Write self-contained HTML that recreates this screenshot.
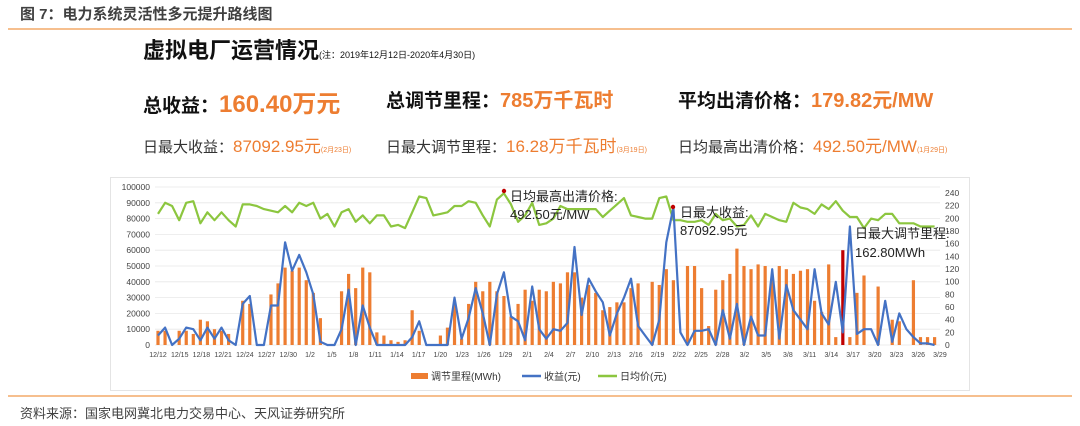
<!DOCTYPE html>
<html><head><meta charset="utf-8"><style>
*{margin:0;padding:0}
body{width:1080px;height:426px;background:#fff;position:relative;overflow:hidden;font-family:"Liberation Sans","Noto Sans CJK SC",sans-serif}
.a{position:absolute;white-space:nowrap}
.o{color:#ED7D31}
.hr{position:absolute;left:8px;width:1064px;height:2px;background:#F6BF8E}
</style></head><body>
<div class="a" style="left:20px;top:3px;font-size:15px;font-weight:bold;color:#404040">图 7：电力系统灵活性多元提升路线图</div>
<div class="hr" style="top:28px"></div>
<div class="a" style="left:143px;top:33px;font-size:22px;font-weight:bold;color:#111">虚拟电厂运营情况<span style="font-size:9px;font-weight:normal">(注：2019年12月12日-2020年4月30日)</span></div>
<div class="a" style="left:143px;top:84px;font-size:19px;font-weight:bold;color:#111">总收益：<span class="o" style="font-size:24px">160.40万元</span></div>
<div class="a" style="left:386px;top:84px;font-size:19px;font-weight:bold;color:#111">总调节里程：<span class="o" style="font-size:20px">785万千瓦时</span></div>
<div class="a" style="left:678px;top:84px;font-size:19px;font-weight:bold;color:#111">平均出清价格：<span class="o" style="font-size:20px">179.82元/MW</span></div>
<div class="a" style="left:143px;top:132px;font-size:15px;color:#333">日最大收益：<span class="o" style="font-size:17px">87092.95元</span><span class="o" style="font-size:7px">(2月23日)</span></div>
<div class="a" style="left:386px;top:132px;font-size:15px;color:#333">日最大调节里程：<span class="o" style="font-size:17px">16.28万千瓦时</span><span class="o" style="font-size:7px">(3月19日)</span></div>
<div class="a" style="left:678px;top:132px;font-size:15px;color:#333">日均最高出清价格：<span class="o" style="font-size:17px">492.50元/MW</span><span class="o" style="font-size:7px">(1月29日)</span></div>
<svg id="c" class="a" style="left:0;top:0" width="1080" height="426" xmlns="http://www.w3.org/2000/svg" font-family="Liberation Sans,Noto Sans CJK SC,sans-serif"></svg>
<div class="hr" style="top:395px"></div>
<div class="a" style="left:20px;top:403px;font-size:13px;color:#404040">资料来源：国家电网冀北电力交易中心、天风证券研究所</div>
<script>
var bars=[9,9,0,9,9,7,16,15,10,9,7,0,28,26,0,0,32,39,49,47,49,41,33,17,0,0,34,45,36,49,46,8,6,3,2,3,22,9,0,0,6,11,26,4,26,40,34,40,34,31,18,26,35,28,35,34,40,39,46,46,30,38,33,22,24,27,27,36,39,0,40,38,48,41,0,50,50,36,12,35,41,45,61,50,48,51,50,43,50,48,45,47,48,28,21,51,5,60,5,33,44,0,37,0,16,15,0,41,5,5,5];
var blue=[6,11,0,4,11,10,3,11,4,11,3,0,26,31,0,0,25,25,65,47,57,46,32,2,0,0,10,35,0,25,11,0,0,0,0,0,5,15,0,0,0,0,30,4,17,36,20,0,32,46,18,15,3,37,10,4,10,9,14,62,19,42,34,27,6,20,30,42,12,6,0,16,65,87,8,0,9,9,10,0,22,4,26,0,18,6,6,48,4,38,22,16,10,48,20,13,40,8,75,7,10,10,0,28,2,20,10,5,1,1,0];
var green=[83,90,88,79,90,91,77,84,79,84,79,75,89,89,88,86,85,84,88,84,90,88,90,80,83,75,84,86,78,82,77,82,82,75,76,74,84,94,93,82,83,84,88,88,91,90,82,75,92,96,89,78,82,90,76,77,80,88,86,86,86,86,86,81,85,89,93,82,81,80,80,93,94,79,79,78,78,79,76,83,79,80,75,76,82,75,83,81,79,78,90,87,86,83,89,86,91,85,81,81,74,80,79,83,83,77,77,77,75,75,75];
var s='',X0=158,dx=7.06,Y0=345,k=1.58;
s+='<rect x="110.5" y="177.5" width="859" height="213" fill="#fff" stroke="#e4e4e4"/>';
for(var j=0;j<=10;j++){var y=Y0-j*15.8;s+='<line x1="155" x2="940" y1="'+y+'" y2="'+y+'" stroke="#e8e8e8" stroke-width="0.8"/>';
s+='<text x="150" y="'+(y+3)+'" font-size="8.5" fill="#444" text-anchor="end">'+(j*10000)+'</text>';}
for(var j=0;j<=12;j++){var y=Y0-j*12.67;s+='<text x="945" y="'+(y+3)+'" font-size="8.5" fill="#444">'+(j*20)+'</text>';}
for(var i=0;i<bars.length;i++){var h=bars[i]*k;s+='<rect x="'+(X0+i*dx-1.6)+'" y="'+(Y0-h)+'" width="3.2" height="'+h+'" fill="'+(i==97?'#C00000':'#ED7D31')+'"/>';}
function pl(a,c){var p='';for(var i=0;i<a.length;i++)p+=(X0+i*dx).toFixed(1)+','+(Y0-a[i]*k).toFixed(1)+' ';return '<polyline points="'+p+'" fill="none" stroke="'+c+'" stroke-width="2.2" stroke-linejoin="round"/>';}
s+=pl(green,'#8CC63F')+pl(blue,'#4472C4');
var d=['12/12','12/15','12/18','12/21','12/24','12/27','12/30','1/2','1/5','1/8','1/11','1/14','1/17','1/20','1/23','1/26','1/29','2/1','2/4','2/7','2/10','2/13','2/16','2/19','2/22','2/25','2/28','3/2','3/5','3/8','3/11','3/14','3/17','3/20','3/23','3/26','3/29'];
for(var i=0;i<d.length;i++)s+='<text x="'+(X0+i*21.72)+'" y="357" font-size="7" fill="#444" text-anchor="middle">'+d[i]+'</text>';
s+='<circle cx="504" cy="191" r="2.2" fill="#C00000"/><circle cx="673" cy="207" r="2.2" fill="#C00000"/>';
s+='<text x="510" y="201" font-size="13" fill="#222">日均最高出清价格:</text><text x="510" y="219" font-size="13" fill="#222">492.50元/MW</text>';
s+='<text x="680" y="217" font-size="13" fill="#222">日最大收益:</text><text x="680" y="235" font-size="13" fill="#222">87092.95元</text>';
s+='<text x="855" y="238" font-size="13" fill="#222">日最大调节里程:</text><text x="855" y="257" font-size="13" fill="#222">162.80MWh</text>';
s+='<rect x="411" y="373" width="17" height="6" fill="#ED7D31"/><text x="431" y="380" font-size="10" fill="#333">调节里程(MWh)</text>';
s+='<line x1="522" x2="541" y1="376" y2="376" stroke="#4472C4" stroke-width="2.5"/><text x="544" y="380" font-size="10" fill="#333">收益(元)</text>';
s+='<line x1="598" x2="617" y1="376" y2="376" stroke="#8CC63F" stroke-width="2.5"/><text x="620" y="380" font-size="10" fill="#333">日均价(元)</text>';
document.getElementById('c').innerHTML=s;
</script>
</body></html>
